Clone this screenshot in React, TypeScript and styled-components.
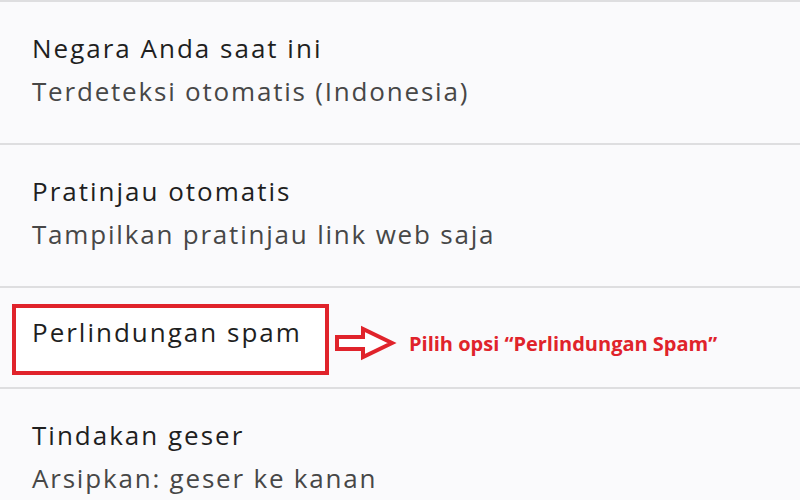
import styled, { createGlobalStyle } from 'styled-components';

const GlobalStyle = createGlobalStyle`
  html, body {
    margin: 0;
    padding: 0;
    background: #fafafc;
  }
  body {
    font-family: 'Open Sans', Roboto, sans-serif;
  }
`;

type Setting = {
  title: string;
  subtitle?: string;
  highlight?: boolean;
};

const settings: Setting[] = [
  { title: 'Negara Anda saat ini', subtitle: 'Terdeteksi otomatis (Indonesia)' },
  { title: 'Pratinjau otomatis', subtitle: 'Tampilkan pratinjau link web saja' },
  { title: 'Perlindungan spam', highlight: true },
  { title: 'Tindakan geser', subtitle: 'Arsipkan: geser ke kanan' },
];

// hollow block arrow pointing at the note
const ArrowIcon = () => (
  <ArrowSvg width='64' height='40' viewBox='0 0 64 40'>
    <path
      d='M4 14 H30 V6 L59 20 L30 34 V26 H4 Z'
      fill='#ffffff'
      stroke='#e0232b'
      strokeWidth='4'
      strokeLinejoin='miter'
    />
  </ArrowSvg>
);

const App = () => {
  return (
    <>
      <GlobalStyle />
      <Screen>
        {settings.map((s) =>
          s.highlight ? (
            <HighlightRow key={s.title}>
              <MarkBox>
                <Title>{s.title}</Title>
              </MarkBox>
              <ArrowIcon />
              <Note>Pilih opsi “Perlindungan Spam”</Note>
            </HighlightRow>
          ) : (
            <Row key={s.title}>
              <Title>{s.title}</Title>
              {s.subtitle && <Subtitle>{s.subtitle}</Subtitle>}
            </Row>
          )
        )}
      </Screen>
    </>
  );
};

export default App;

const Screen = styled.div`
  width: 800px;
  height: 500px;
  overflow: hidden;
  background: #fafafc;
  border-top: 2px solid #dedee0;
  box-sizing: border-box;
`;

const Row = styled.div`
  display: flex;
  flex-direction: column;
  gap: 9px;
  height: 143px;
  box-sizing: border-box;
  padding: 29px 32px 0;
  border-bottom: 2px solid #dedee0;
`;

const HighlightRow = styled.div`
  display: flex;
  align-items: flex-start;
  height: 101px;
  box-sizing: border-box;
  padding: 16px 0 0 12px;
  border-bottom: 2px solid #dedee0;
`;

const MarkBox = styled.div`
  width: 317px;
  height: 71px;
  box-sizing: border-box;
  border: 4px solid #e0232b;
  padding: 7px 0 0 16px;
  margin-right: 4px;
  background: #ffffff;
`;

const ArrowSvg = styled.svg`
  margin-top: 19px;
  flex-shrink: 0;
`;

const Title = styled.div`
  font-size: 26px;
  line-height: 34px;
  color: #1f1f1f;
  letter-spacing: 2px;
  white-space: nowrap;
`;

const Subtitle = styled.div`
  font-size: 26px;
  line-height: 34px;
  color: #474747;
  letter-spacing: 1.8px;
  white-space: nowrap;
`;

const Note = styled.div`
  margin: 26px 0 0 12px;
  font-weight: 700;
  font-size: 20px;
  line-height: 27px;
  color: #e0232b;
  white-space: nowrap;
`;
